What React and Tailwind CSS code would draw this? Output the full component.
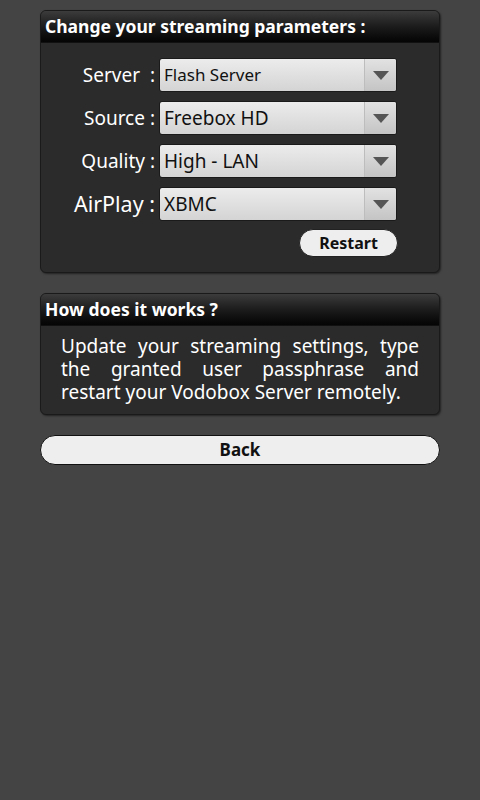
import { useState } from 'react';

const FONT = { fontFamily: '"Noto Sans", "Open Sans", sans-serif' };

const FIELDS = [
  { id: 'server',  label: 'Server  :', value: 'Flash Server', labelSize: 'text-[19px]', valueSize: 'text-[17px]' },
  { id: 'source',  label: 'Source :',  value: 'Freebox HD',   labelSize: 'text-[19px]', valueSize: 'text-[19px]' },
  { id: 'quality', label: 'Quality :', value: 'High - LAN',   labelSize: 'text-[19px]', valueSize: 'text-[19px]' },
  { id: 'airplay', label: 'AirPlay :', value: 'XBMC',         labelSize: 'text-[21.5px]', valueSize: 'text-[19px]' },
];

function Spinner({ value, size }) {
  return (
    <div className="flex h-[34px] w-[238px] overflow-hidden rounded-[3px] border border-[#1a1a1a] bg-gradient-to-b from-[#ececec] to-[#d4d4d4]">
      <div className={`flex flex-1 items-center pl-[4px] text-[#111] ${size}`}>{value}</div>
      <div className="flex w-[32px] items-center justify-center border-l border-[#bdbdbd] bg-gradient-to-b from-[#e2e2e2] to-[#c4c4c4]">
        <svg width="16" height="9" viewBox="0 0 16 9">
          <path d="M0 0 L16 0 L8 9 Z" fill="#555" />
        </svg>
      </div>
    </div>
  );
}

function Panel({ title, children }) {
  return (
    <div className="mx-[40px] overflow-hidden rounded-[6px] border border-[#1a1a1a] bg-[#2b2b2b] shadow-[1px_1px_2px_rgba(0,0,0,0.5)]">
      <div className="flex h-[32px] items-center border-b border-[#111] bg-gradient-to-b from-[#3c3c3c] via-[#1c1c1c] to-[#050505] px-[4px] text-[17.5px] font-bold text-white">
        {title}
      </div>
      {children}
    </div>
  );
}

export default function App() {
  const [values] = useState(FIELDS);

  return (
    <div className="min-h-[800px] w-[480px] bg-[#444444] pt-[10px]" style={FONT}>

      {/* ── Streaming parameters ── */}
      <Panel title="Change your streaming parameters :">
        <div className="flex flex-col gap-[9px] pt-[15px]">
          {values.map(f => (
            <div key={f.id} className="flex items-center">
              <div className={`w-[118px] whitespace-pre pr-[4px] text-right text-white ${f.labelSize}`}>{f.label}</div>
              <Spinner value={f.value} size={f.valueSize} />
            </div>
          ))}
        </div>
        <div className="flex justify-end pb-[15px] pr-[41px] pt-[8px]">
          <button className="h-[28px] w-[99px] rounded-full border border-[#222] bg-[#eeeeee] text-[16px] font-bold text-[#111]">
            Restart
          </button>
        </div>
      </Panel>

      {/* ── How does it work ── */}
      <div className="mt-[20px]">
        <Panel title="How does it works ?">
          <p className="px-[20px] pb-[10px] pt-[9px] text-justify text-[19px] leading-[23px] text-white">
            Update your streaming settings, type the granted user passphrase and restart your Vodobox Server remotely.
          </p>
        </Panel>
      </div>

      {/* ── Back ── */}
      <div className="mx-[40px] mt-[20px]">
        <button className="h-[30px] w-full rounded-full border border-[#111] bg-[#eeeeee] text-[17px] font-bold text-[#111]">
          Back
        </button>
      </div>
    </div>
  );
}
